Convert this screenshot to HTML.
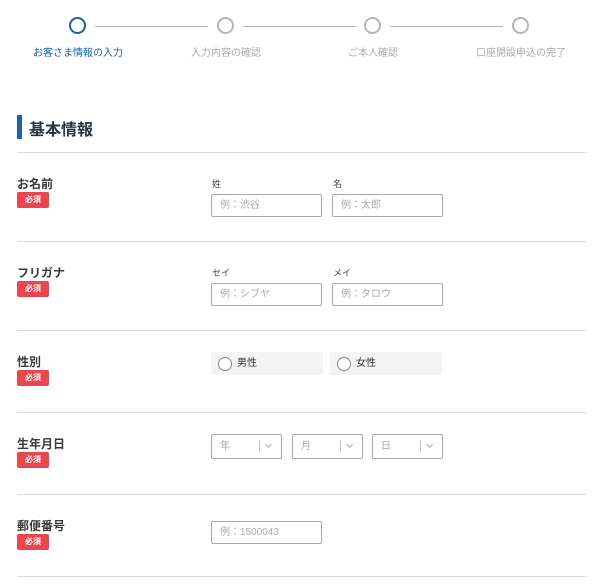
<!DOCTYPE html>
<html><head><meta charset="utf-8"><style>
*{margin:0;padding:0;box-sizing:border-box}
body{width:600px;height:587px;background:#fff;font-family:"Liberation Sans","Noto Sans CJK JP",sans-serif;position:relative;overflow:hidden;color:#333}
.a{position:absolute}
.c{width:17px;height:17px;border-radius:50%;border:2px solid #b5b5b5;background:#fff}
.ln{height:1px;background:#b5b5b5;top:26px}
.st{font-size:10px;color:#aaa;top:44px;width:140px;text-align:center}
.hr{left:17px;width:570px;height:1px;background:#dcdcdc}
.lb{left:17px;font-size:12px;font-weight:bold;color:#3a3a3a}
.bd{left:17px;width:32px;height:16px;background:#e9474d;border-radius:2px;color:#fff;font-size:8px;font-weight:bold;text-align:center;line-height:16px}
.sl{font-size:9px;color:#444}
.in{border:1px solid #a9a9a9;border-radius:2px;height:23px;width:111px;font-size:10px;color:#aaa;padding-left:8px;line-height:22px}
.rd{background:#f4f4f4;width:112px;height:23px;font-size:10px;color:#333;line-height:23px;padding-left:26px;border-radius:2px}
.rd::before{content:"";position:absolute;left:7px;top:5px;width:12px;height:12px;border:1px solid #888;border-radius:50%;background:#fff}
.se{border:1px solid #a9a9a9;border-radius:2px;height:25px;width:71px;font-size:10px;color:#aaa;padding-left:8px;line-height:24px}
.se::after{content:"";position:absolute;left:47px;top:5px;width:1px;height:13px;background:#ccc}
.se span{position:absolute;left:54px;top:7px;width:5px;height:5px;border-right:1px solid #aaa;border-bottom:1px solid #aaa;transform:rotate(45deg)}
</style></head><body>
<div class="a c" style="left:69px;top:17px;border-color:#1a62ae"></div>
<div class="a c" style="left:217px;top:17px"></div>
<div class="a c" style="left:364px;top:17px"></div>
<div class="a c" style="left:512px;top:17px"></div>
<div class="a ln" style="left:95px;width:113px"></div>
<div class="a ln" style="left:243px;width:113px"></div>
<div class="a ln" style="left:390px;width:113px"></div>
<div class="a st" style="left:8px;color:#1a62ae">お客さま情報の入力</div>
<div class="a st" style="left:156px">入力内容の確認</div>
<div class="a st" style="left:303px">ご本人確認</div>
<div class="a st" style="left:451px">口座開設申込の完了</div>
<div class="a" style="left:17px;top:115px;width:5px;height:24px;background:#1a62ae"></div>
<div class="a" style="left:29px;top:116px;font-size:16px;font-weight:bold;color:#2a3440">基本情報</div>
<div class="a hr" style="top:152px"></div>

<div class="a lb" style="top:175px">お名前</div><div class="a bd" style="top:192px">必須</div>
<div class="a sl" style="left:212px;top:177px">姓</div><div class="a sl" style="left:333px;top:177px">名</div>
<div class="a in" style="left:211px;top:194px">例：渋谷</div><div class="a in" style="left:332px;top:194px">例：太郎</div>
<div class="a hr" style="top:241px"></div>

<div class="a lb" style="top:264px">フリガナ</div><div class="a bd" style="top:281px">必須</div>
<div class="a sl" style="left:212px;top:266px">セイ</div><div class="a sl" style="left:333px;top:266px">メイ</div>
<div class="a in" style="left:211px;top:283px">例：シブヤ</div><div class="a in" style="left:332px;top:283px">例：タロウ</div>
<div class="a hr" style="top:330px"></div>

<div class="a lb" style="top:353px">性別</div><div class="a bd" style="top:370px">必須</div>
<div class="a rd" style="left:211px;top:352px">男性</div><div class="a rd" style="left:330px;top:352px">女性</div>
<div class="a hr" style="top:412px"></div>

<div class="a lb" style="top:435px">生年月日</div><div class="a bd" style="top:452px">必須</div>
<div class="a se" style="left:211px;top:434px">年<span></span></div>
<div class="a se" style="left:292px;top:434px">月<span></span></div>
<div class="a se" style="left:372px;top:434px">日<span></span></div>
<div class="a hr" style="top:494px"></div>

<div class="a lb" style="top:517px">郵便番号</div><div class="a bd" style="top:534px">必須</div>
<div class="a in" style="left:211px;top:521px">例：1500043</div>
<div class="a hr" style="top:576px"></div>
</body></html>
